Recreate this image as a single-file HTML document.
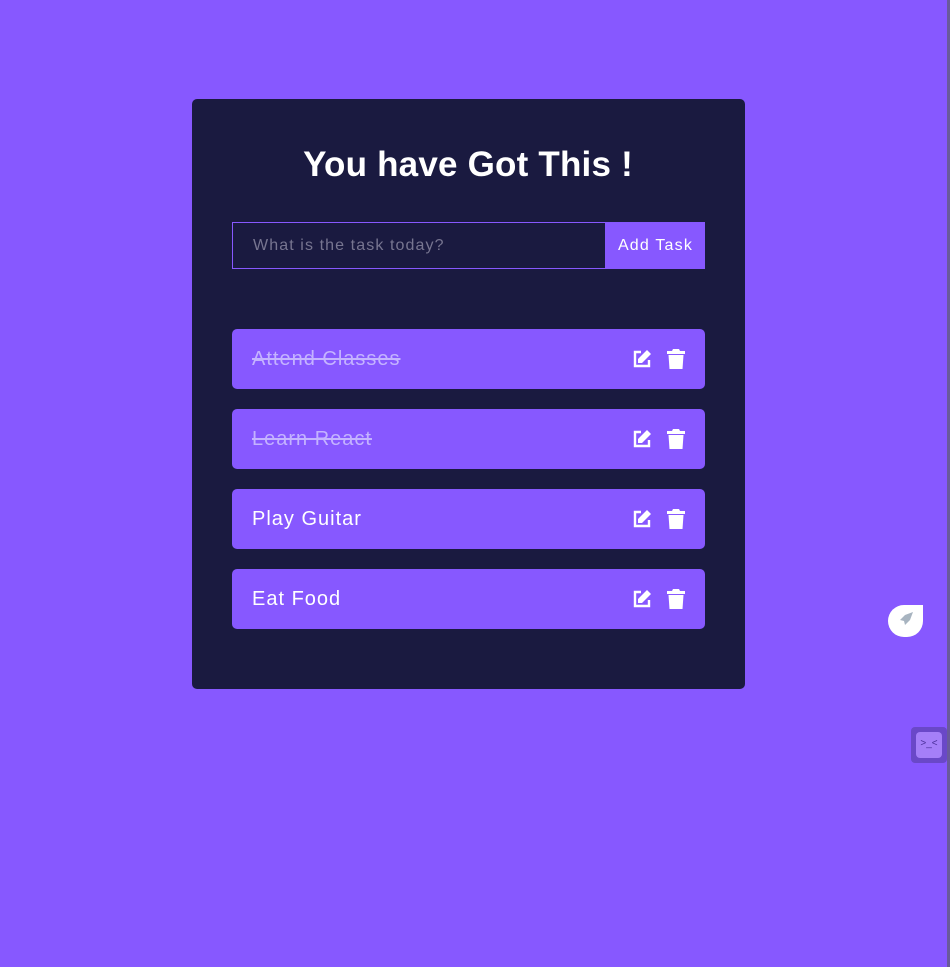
<!DOCTYPE html>
<html><head><style>
body{margin:0;width:950px;height:967px;background:#8758ff;font-family:"Liberation Sans",sans-serif;position:relative;overflow:hidden}
.edge{position:absolute;right:0;top:0;width:3px;height:967px;background:#6a5a9a}
.card{position:absolute;left:192px;top:99px;width:553px;height:590px;background:#1a1a40;border-radius:5px}
h1{position:absolute;left:0;right:14px;top:145px;margin:0;text-align:center;color:#fff;font-size:35px;font-weight:bold;letter-spacing:0.2px}
.inp{position:absolute;left:232px;top:222px;height:45px;border:1px solid #8758ff;color:#777590;font-size:16px;line-height:45px;padding-left:20px;width:352px;letter-spacing:1.1px}
.btn{position:absolute;left:606px;top:222px;width:99px;height:47px;background:#8758ff;color:#fff;font-size:16px;line-height:47px;text-align:center;letter-spacing:1.2px}
.item{position:absolute;left:232px;width:473px;height:60px;background:#8758ff;border-radius:5px;color:#fff;font-size:20px;letter-spacing:1px}
.item span{position:absolute;left:20px;top:19px}
.done{color:#c4b3ff;text-decoration:line-through}
.ic{position:absolute;top:20px}
</style></head><body>
<div class="edge"></div>
<div class="card"></div>
<h1>You have Got This !</h1>
<div class="inp">What is the task today?</div>
<div class="btn">Add Task</div>
<div class="item" style="top:329px"><span class="done">Attend Classes</span>
<svg class="ic" style="left:400px" width="20" height="20" viewBox="0 0 20 20"><path d="M9 3H3v14h14v-6" fill="none" stroke="#fff" stroke-width="2.4"/><path d="M15 1l4 4-9 9H6v-4z" fill="#fff"/></svg>
<svg class="ic" style="left:435px" width="18" height="20" viewBox="0 0 18 20"><path d="M0 2h5l1-2h6l1 2h5v3H0z M1.5 6h15l-1 14h-13z" fill="#fff"/></svg></div>
<div class="item" style="top:409px"><span class="done">Learn React</span>
<svg class="ic" style="left:400px" width="20" height="20" viewBox="0 0 20 20"><path d="M9 3H3v14h14v-6" fill="none" stroke="#fff" stroke-width="2.4"/><path d="M15 1l4 4-9 9H6v-4z" fill="#fff"/></svg>
<svg class="ic" style="left:435px" width="18" height="20" viewBox="0 0 18 20"><path d="M0 2h5l1-2h6l1 2h5v3H0z M1.5 6h15l-1 14h-13z" fill="#fff"/></svg></div>
<div class="item" style="top:489px"><span>Play Guitar</span>
<svg class="ic" style="left:400px" width="20" height="20" viewBox="0 0 20 20"><path d="M9 3H3v14h14v-6" fill="none" stroke="#fff" stroke-width="2.4"/><path d="M15 1l4 4-9 9H6v-4z" fill="#fff"/></svg>
<svg class="ic" style="left:435px" width="18" height="20" viewBox="0 0 18 20"><path d="M0 2h5l1-2h6l1 2h5v3H0z M1.5 6h15l-1 14h-13z" fill="#fff"/></svg></div>
<div class="item" style="top:569px"><span>Eat Food</span>
<svg class="ic" style="left:400px" width="20" height="20" viewBox="0 0 20 20"><path d="M9 3H3v14h14v-6" fill="none" stroke="#fff" stroke-width="2.4"/><path d="M15 1l4 4-9 9H6v-4z" fill="#fff"/></svg>
<svg class="ic" style="left:435px" width="18" height="20" viewBox="0 0 18 20"><path d="M0 2h5l1-2h6l1 2h5v3H0z M1.5 6h15l-1 14h-13z" fill="#fff"/></svg></div>
<div style="position:absolute;left:888px;top:605px;width:35px;height:32px;background:#fff;border-radius:16px 0 16px 16px"></div>
<svg style="position:absolute;left:897px;top:611px" width="18" height="20" viewBox="0 0 18 20"><path d="M16 1l-8 3-5 5 4 1 1 4 5-5z" fill="#a8b4c0"/></svg>
<div style="position:absolute;left:911px;top:727px;width:36px;height:36px;background:#6a48c8;border-radius:4px"></div>
<div style="position:absolute;left:916px;top:732px;width:26px;height:26px;background:#a57ff8;border-radius:4px;color:#4a2f99;font-size:10px;text-align:center;line-height:24px">&gt;_&lt;</div>
</body></html>
